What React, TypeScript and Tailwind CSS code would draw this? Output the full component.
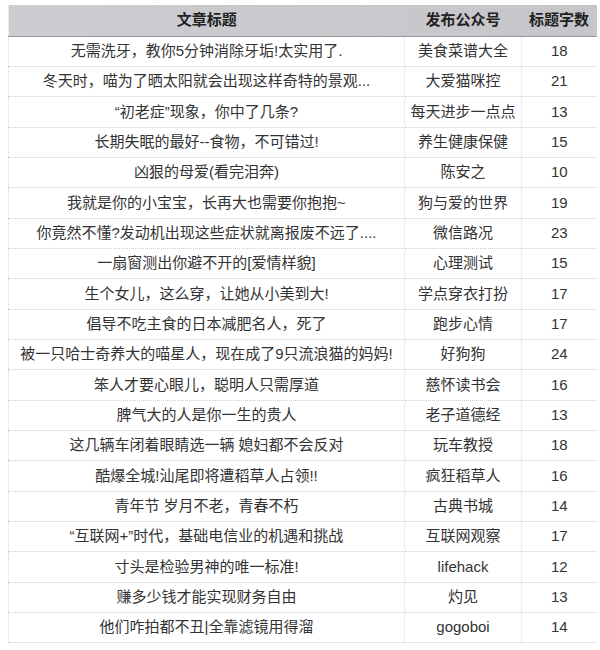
const rows: [string, string, number][] = [
  ['无需洗牙，教你5分钟消除牙垢!太实用了.', '美食菜谱大全', 18],
  ['冬天时，喵为了晒太阳就会出现这样奇特的景观...', '大爱猫咪控', 21],
  ['“初老症”现象，你中了几条?', '每天进步一点点', 13],
  ['长期失眠的最好--食物，不可错过!', '养生健康保健', 15],
  ['凶狠的母爱(看完泪奔)', '陈安之', 10],
  ['我就是你的小宝宝，长再大也需要你抱抱~', '狗与爱的世界', 19],
  ['你竟然不懂?发动机出现这些症状就离报废不远了....', '微信路况', 23],
  ['一扇窗测出你避不开的[爱情样貌]', '心理测试', 15],
  ['生个女儿，这么穿，让她从小美到大!', '学点穿衣打扮', 17],
  ['倡导不吃主食的日本减肥名人，死了', '跑步心情', 17],
  ['被一只哈士奇养大的喵星人，现在成了9只流浪猫的妈妈!', '好狗狗', 24],
  ['笨人才要心眼儿，聪明人只需厚道', '慈怀读书会', 16],
  ['脾气大的人是你一生的贵人', '老子道德经', 13],
  ['这几辆车闭着眼睛选一辆 媳妇都不会反对', '玩车教授', 18],
  ['酷爆全城!汕尾即将遭稻草人占领!!', '疯狂稻草人', 16],
  ['青年节 岁月不老，青春不朽', '古典书城', 14],
  ['“互联网+”时代，基础电信业的机遇和挑战', '互联网观察', 17],
  ['寸头是检验男神的唯一标准!', 'lifehack', 12],
  ['赚多少钱才能实现财务自由', '灼见', 13],
  ['他们咋拍都不丑|全靠滤镜用得溜', 'gogoboi', 14],
];

export default function App() {
  return (
    <div className="h-[650px] w-[600px] bg-white pl-2 pt-[5px] font-['Liberation_Sans','Noto_Sans_CJK_SC',sans-serif] text-[15px] text-[#333]">
      <table className="w-[588px] table-fixed border-collapse border-l border-dotted border-[#d8d8d8]">
        <colgroup>
          <col className="w-[396px]" />
          <col className="w-[117px]" />
          <col className="w-[75px]" />
        </colgroup>
        <thead>
          <tr className="h-[31px] bg-gradient-to-r from-[#cdccd0] to-[#c6c5c9] font-bold text-[#222]">
            <th className="border-b border-[#9a999d] text-center font-bold">文章标题</th>
            <th className="border-b border-[#9a999d] text-center font-bold">发布公众号</th>
            <th className="border-b border-[#9a999d] text-center font-bold">标题字数</th>
          </tr>
        </thead>
        <tbody>
          {rows.map(([title, account, count]) => (
            <tr key={title} className="h-[30.35px] border-b border-dotted border-[#cfcfcf]">
              <td className="whitespace-nowrap text-center">{title}</td>
              <td className="border-l border-[#eeeeee] text-center">{account}</td>
              <td className="border-l border-[#eeeeee] text-center">{count}</td>
            </tr>
          ))}
        </tbody>
      </table>
    </div>
  );
}
